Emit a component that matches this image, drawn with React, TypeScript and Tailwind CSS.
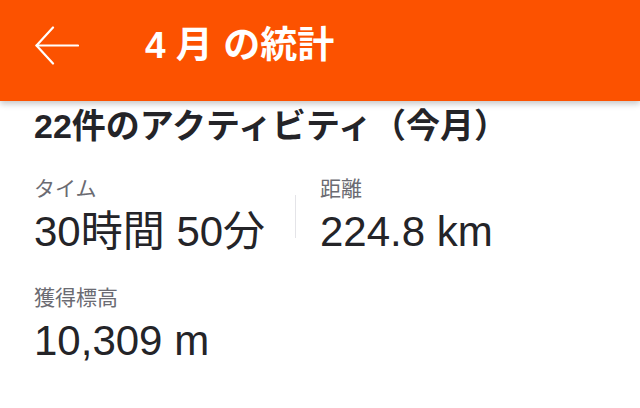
const font = { fontFamily: '"Liberation Sans", "Noto Sans CJK JP", sans-serif' }

function BackArrow() {
  return (
    <svg width="44" height="39" viewBox="0 0 44 39" fill="none" stroke="white" strokeWidth="2.2" strokeLinecap="round" strokeLinejoin="round">
      <path d="M43 19.5H1.5" />
      <path d="M18 1.5L1.5 19.5L18 37.5" />
    </svg>
  )
}

function Stat({ label, value }: { label: string; value: string }) {
  return (
    <div className="flex flex-col">
      <div className="text-[21px] leading-[24px] text-[#6b6b72]">{label}</div>
      <div className="text-[42px] leading-[48px] text-[#242428] mt-[7px]">{value}</div>
    </div>
  )
}

export default function App() {
  return (
    <div className="w-[640px] h-[408px] bg-white overflow-hidden" style={font}>
      <div className="relative z-10 h-[101px] bg-[#fc5200] flex items-center pb-[10px] shadow-[0_3px_6px_rgba(0,0,0,0.22)]">
        <div className="pl-[35px] flex items-center">
          <BackArrow />
        </div>
        <div className="ml-[66px] text-white text-[37px] leading-[44px] font-bold">4 月 の統計</div>
      </div>
      <div className="px-[34px]">
        <div className="text-[34px] leading-[40px] font-bold text-[#242428] mt-[5px]">22件のアクティビティ（今月）</div>
        <div className="flex mt-[31px]">
          <div className="w-[261px]">
            <Stat label="タイム" value="30時間 50分" />
          </div>
          <div className="w-px bg-[#e4e4e8] my-[18px]" />
          <div className="pl-[24px]">
            <Stat label="距離" value="224.8 km" />
          </div>
        </div>
        <div className="mt-[30px]">
          <Stat label="獲得標高" value="10,309 m" />
        </div>
      </div>
    </div>
  )
}
